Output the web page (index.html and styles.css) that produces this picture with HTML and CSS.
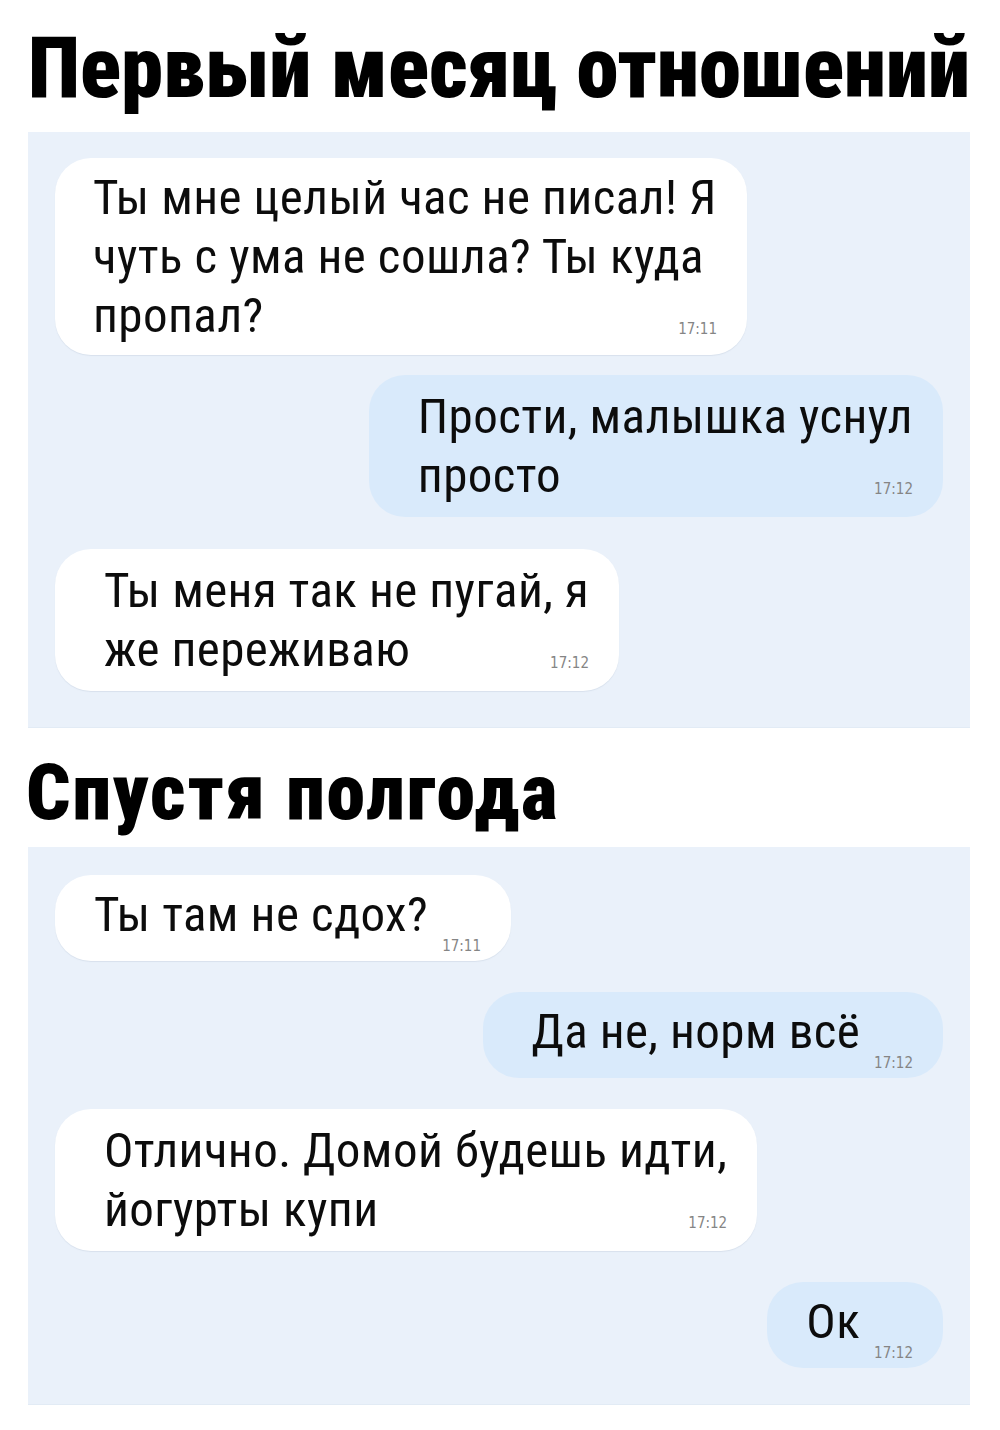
FILE: index.html
```html
<!DOCTYPE html>
<html lang="ru">
<head>
<meta charset="utf-8">
<title>Первый месяц отношений</title>
<link rel="stylesheet" href="styles.css">
</head>
<body>
<main class="page">
  <h1 class="heading heading--first">Первый месяц отношений</h1>
  <section class="chat chat--first">
    <div class="bubble bubble--in bubble--snug">Ты мне целый час не писал! Я<br>чуть с ума не сошла? Ты куда<br>пропал?<span class="time">17:11</span></div>
    <div class="bubble bubble--out bubble--lifted">Прости, малышка уснул<br>просто<span class="time">17:12</span></div>
    <div class="bubble bubble--in">Ты меня так не пугай, я<br>же переживаю<span class="time">17:12</span></div>
  </section>

  <h2 class="heading heading--second">Спустя полгода</h2>
  <section class="chat chat--second">
    <div class="bubble bubble--in bubble--single bubble--tight">Ты там не сдох?<span class="time">17:11</span></div>
    <div class="bubble bubble--out bubble--single">Да не, норм всё<span class="time">17:12</span></div>
    <div class="bubble bubble--in">Отлично. Домой будешь идти,<br>йогурты купи<span class="time">17:12</span></div>
    <div class="bubble bubble--out bubble--single bubble--tight">Ок<span class="time">17:12</span></div>
  </section>
</main>
</body>
</html>
```
FILE: styles.css
```css
html, body {
  margin: 0;
  padding: 0;
  background: #ffffff;
}

.page {
  width: 1000px;
  padding-bottom: 25px;
}

/* Headings: heavy condensed grotesque */
.heading {
  margin: 0;
  font-family: Roboto, "Liberation Sans Narrow", sans-serif;
  font-weight: 900;
  font-stretch: 75%;
  color: #000;
  line-height: 1;
}

.heading--first {
  font-size: 85px;
  padding: 26px 0 0 28px;
  margin-bottom: 21px;
}

.heading--second {
  font-size: 78px;
  letter-spacing: 1.8px;
  padding: 27px 0 0 26px;
  margin-bottom: 15px;
}

/* Chat panels */
.chat {
  margin: 0 30px 0 28px;
  background: #eaf1fa;
  padding: 26px 27px 36px 27px;
  display: flex;
  flex-direction: column;
  gap: 26px;
  box-shadow: 0 1px 0 #e2ebf5;
}

.chat--second {
  padding-top: 28px;
  gap: 31px;
}

/* Message bubbles */
.bubble {
  font-family: Roboto, "Open Sans", sans-serif;
  font-stretch: 75%;
  font-size: 49px;
  line-height: 59px;
  letter-spacing: 0.4px;
  color: #0c0c0c;
  padding: 12px 30px 12px 49px;
  border-radius: 36px;
}

.bubble--in {
  align-self: flex-start;
  background: #ffffff;
  box-shadow: 0 1px 1px rgba(120, 140, 170, 0.15);
}

.bubble--out {
  align-self: flex-end;
  background: #d9eafb;
}

/* the reply follows the first message a little closer */
.bubble--lifted {
  margin: -6px 0 6px;
}

.bubble--snug {
  padding: 10px 30px 10px 38px;
}

.bubble--single {
  padding: 10px 30px 7px 48px;
}

.bubble--single.bubble--tight {
  padding-left: 39px;
}

/* Timestamp sits on the last line, pushed to the right */
.time {
  float: right;
  margin: 36px 0 0 14px;
  font-family: "DejaVu Sans Condensed", "DejaVu Sans", sans-serif;
  font-stretch: condensed;
  font-size: 15px;
  line-height: 15px;
  letter-spacing: 0;
  color: #858585;
}

.bubble--single .time {
  margin-top: 54px;
}
```
